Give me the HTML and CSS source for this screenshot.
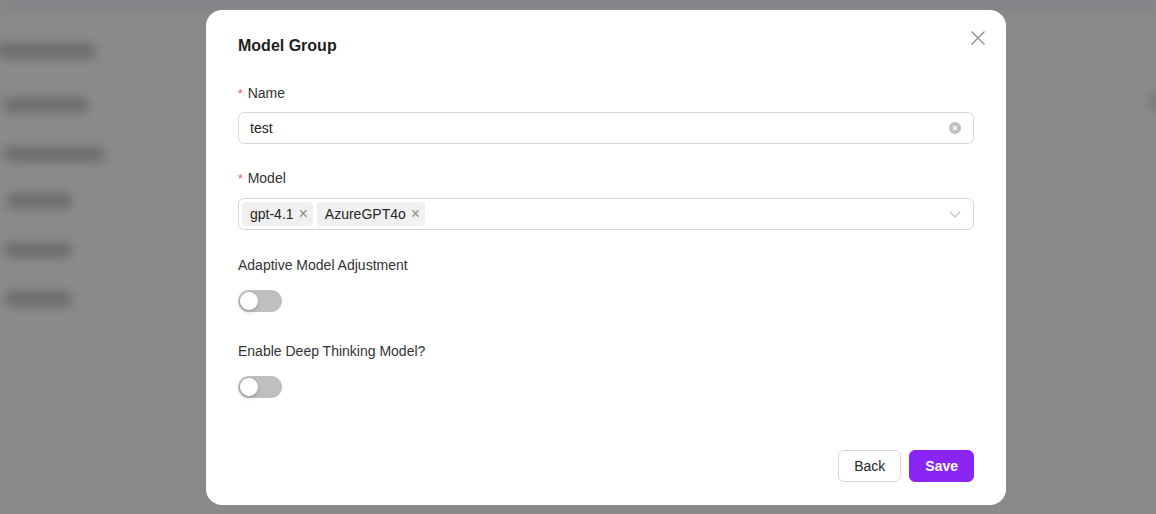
FILE: index.html
```html
<!DOCTYPE html>
<html lang="en">
<head>
    <meta charset="UTF-8">
    <meta name="viewport" content="width=device-width, initial-scale=1.0">
    <title>Model Group</title>
    <link rel="stylesheet" href="styles.css">
</head>
<body>

    <div class="backdrop">
        <div class="top-strip"></div>
        <div class="side-list">
            <div class="side-item w100"></div>
            <div class="side-item w88"></div>
            <div class="side-item w104"></div>
            <div class="side-item w68"></div>
            <div class="side-item w70"></div>
            <div class="side-item w70"></div>
        </div>
        <div class="side-spot"></div>
    </div>

    <div class="overlay">
        <div class="modal">
            <div class="modal-head">
                <h2>Model Group</h2>
                <button class="close" aria-label="Close">
                    <svg width="16" height="16" viewBox="0 0 16 16"><path d="M1.5 1.5 L14.5 14.5 M14.5 1.5 L1.5 14.5" stroke="#8c8c8c" stroke-width="1.3" fill="none"/></svg>
                </button>
            </div>

            <div class="form-item first">
                <label><span class="req">*</span>Name</label>
                <div class="input">
                    <span class="value">test</span>
                    <svg class="clear" width="12" height="12" viewBox="0 0 12 12"><circle cx="6" cy="6" r="6" fill="#bfbfbf"/><path d="M4 4 L8 8 M8 4 L4 8" stroke="#fff" stroke-width="1.2"/></svg>
                </div>
            </div>

            <div class="form-item">
                <label><span class="req">*</span>Model</label>
                <div class="input select">
                    <span class="tag">gpt-4.1 <span class="tag-x">×</span></span>
                    <span class="tag">AzureGPT4o <span class="tag-x">×</span></span>
                    <svg class="arrow" width="12" height="12" viewBox="0 0 12 12"><path d="M1 4 L6 9 L11 4" stroke="#bfbfbf" stroke-width="1.2" fill="none"/></svg>
                </div>
            </div>

            <div class="form-item">
                <label>Adaptive Model Adjustment</label>
                <div class="control"><span class="switch"><span class="knob"></span></span></div>
            </div>

            <div class="form-item">
                <label>Enable Deep Thinking Model?</label>
                <div class="control"><span class="switch"><span class="knob"></span></span></div>
            </div>

            <div class="modal-foot">
                <button class="btn">Back</button>
                <button class="btn primary">Save</button>
            </div>
        </div>
    </div>

</body>
</html>
```

FILE: styles.css
```css
html, body { margin: 0; height: 100%; overflow: hidden; }
body { font-family: "Liberation Sans", Arial, sans-serif; font-size: 14px; color: #333; background: #8a8a8a; }

.backdrop { position: absolute; inset: 0; background: #8a8a8a; filter: blur(5px); }
.top-strip { height: 10px; background: #838186; }
.side-list { display: flex; flex-direction: column; padding-top: 33px; }
.side-item { height: 16px; background: #6e6e6e; border-radius: 8px; margin-left: 3px; margin-bottom: 33px; }
.side-item.w100 { width: 100px; margin-left: -4px; margin-bottom: 38px; }
.side-item.w88 { width: 86px; }
.side-item.w104 { width: 102px; margin-bottom: 31px; }
.side-item.w68 { width: 66px; margin-left: 6px; }
.side-item.w70 { width: 68px; margin-left: 4px; }
.side-spot { position: absolute; right: -8px; top: 92px; width: 16px; height: 20px; border-radius: 50%; background: #7a7a7a; }

.overlay { position: absolute; inset: 0; display: flex; justify-content: center; padding: 10px 0 0 56px; }
.modal { width: 800px; height: 495px; box-sizing: border-box; background: #fff; border-radius: 16px; padding: 24px 32px 23px; display: flex; flex-direction: column; }

.modal-head { display: flex; justify-content: space-between; align-items: flex-start; margin-bottom: 24px; }
.modal-head h2 { margin: 0; font-size: 16px; line-height: 24px; font-weight: bold; color: #1f1f1f; }
.close { border: none; background: none; padding: 0; margin: -6px -14px 0 0; width: 20px; height: 20px; display: flex; align-items: center; justify-content: center; cursor: pointer; }

.form-item { margin-bottom: 24px; }
.form-item label { display: block; line-height: 22px; margin-bottom: 8px; color: #333; }
.form-item.first label { margin-bottom: 7px; }
.form-item.first { margin-bottom: 23px; }
.req { color: #ff4d4f; font-size: 12px; margin-right: 5px; }

.input { height: 32px; box-sizing: border-box; border: 1px solid #d9d9d9; border-radius: 6px; display: flex; align-items: center; padding: 0 12px 0 11px; }
.input .value { flex: 1; color: #222; }
.select { padding-left: 3px; gap: 4px; }
.tag { height: 24px; line-height: 24px; background: #f0f0f0; border-radius: 4px; padding: 0 5px 0 8px; color: #262626; }
.tag-x { color: #8c8c8c; font-size: 16px; margin-left: 1px; }
.arrow { margin-left: auto; }

.control { height: 32px; display: flex; align-items: center; }
.switch { width: 44px; height: 22px; margin-top: 2px; border-radius: 11px; background: #bfbfbf; position: relative; display: inline-block; }
.knob { position: absolute; left: 2px; top: 2px; width: 18px; height: 18px; border-radius: 50%; background: #fff; box-shadow: 0 2px 4px rgba(0, 35, 11, 0.2); }

.modal-foot { margin-top: auto; display: flex; justify-content: flex-end; gap: 8px; }
.btn { height: 32px; padding: 0 15px; border: 1px solid #d9d9d9; border-radius: 6px; background: #fff; font-family: inherit; font-size: 14px; color: #262626; cursor: pointer; }
.btn.primary { background: #8a25f4; border-color: #8a25f4; color: #fff; font-weight: bold; padding: 0 15px; }
```
